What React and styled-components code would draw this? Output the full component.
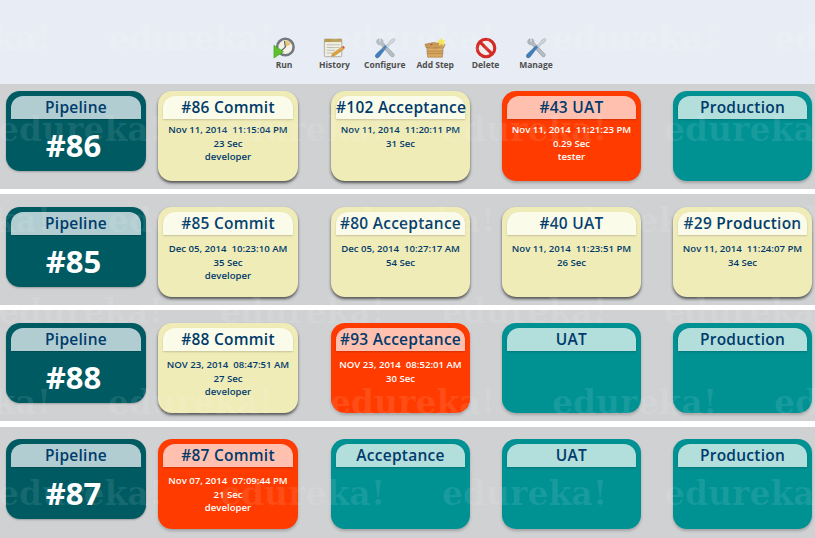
import React from "react";
import styled, { createGlobalStyle, css } from "styled-components";

const Global = createGlobalStyle`
	html, body {
		margin: 0;
		padding: 0;
		background: #d0d1d3;
		font-family: "Open Sans", "Liberation Sans", sans-serif;
	}
`;

const RunIcon = () => (
	<svg width="22" height="22" viewBox="0 0 24 24">
		<circle cx="13.5" cy="11" r="9" fill="#f4f1e6" stroke="#74787f" strokeWidth="2.8" />
		<path d="M13.5 3.5 A7.5 7.5 0 0 1 19.5 8 L13.5 11 Z" fill="#e8c877" />
		<path d="M12.5 4.5 L13.5 11 L9 15" fill="none" stroke="#55585c" strokeWidth="1.2" />
		<path d="M1 9 L11.5 16 L1 23 Z" fill="#5fc02d" stroke="#3c9a18" strokeWidth="0.6" />
	</svg>
);

const HistoryIcon = () => (
	<svg width="22" height="22" viewBox="0 0 24 24">
		<rect x="1.5" y="2.5" width="19" height="19" rx="1" fill="#eeeee2" stroke="#a9a99c" />
		<rect x="1.5" y="2" width="19" height="3.5" fill="#b79a55" />
		<path d="M4 8.5h14M4 11.5h14M4 14.5h9M4 17.5h7" stroke="#b9b9ad" strokeWidth="1" />
		<path d="M10 18.5 L21 10.5 L23 13 L12.5 20.5 L9.5 21 Z" fill="#e2a23b" stroke="#a8742a" strokeWidth="0.5" />
		<path d="M21 10.5 L23 13 L23.8 11.5 L22.5 9.8 Z" fill="#d9453a" />
	</svg>
);

const ToolsIcon = () => (
	<svg width="22" height="22" viewBox="0 0 24 24">
		<path
			d="M5.5 2 C3.5 2.5 2.5 4.5 3.2 6.5 C4 8.2 5.8 8.8 7.2 8.4 L18.5 21 C19.5 22 21.5 22 22 20.5 C22.5 19.5 22 18.5 21 17.8 L9.8 6 C10.2 4.2 9 2.4 7.4 1.8 L8 5.4 L5.8 6 Z"
			fill="#b4bcc3"
			stroke="#858e96"
			strokeWidth="0.5"
		/>
		<path d="M21.5 1.5 L23 3 L20.5 6.5 L18.8 7 L13.5 12.5 L12 11 L17.2 5.4 L17.8 3.8 Z" fill="#d0d6db" stroke="#8c959c" strokeWidth="0.5" />
		<path d="M13.8 11 L12 9.5 L2.5 18.5 C1 20 1.3 21.8 2.2 22.4 C3.3 23.2 4.8 22.8 5.8 21.6 Z" fill="#3f7fbc" stroke="#2b5f95" strokeWidth="0.5" />
	</svg>
);

const BoxIcon = () => (
	<svg width="22" height="22" viewBox="0 0 24 24">
		<path d="M3 10 L21 10 L20 22 L4 22 Z" fill="#d9a860" stroke="#96703a" strokeWidth="0.6" />
		<path d="M1 8 L10 6 L23 8 L21.5 12 L2.5 12 Z" fill="#c99a55" stroke="#96703a" strokeWidth="0.6" />
		<path d="M3 15.5h18M3 18h18" stroke="#a87f44" strokeWidth="0.7" />
		<path d="M7 8l2 0 1 1-3 0z" fill="#c5392f" />
		<path d="M19 0.5 L20.4 3.6 L23.8 4 L21.3 6.2 L22 9.5 L19 7.8 L16 9.5 L16.7 6.2 L14.2 4 L17.6 3.6 Z" fill="#f7e33f" />
	</svg>
);

const DeleteIcon = () => (
	<svg width="22" height="22" viewBox="0 0 24 24">
		<circle cx="12" cy="12" r="9.6" fill="#f3eeee" stroke="#d42a27" strokeWidth="3.4" />
		<path d="M5.5 5.5 L18.5 18.5" stroke="#d42a27" strokeWidth="3.4" />
	</svg>
);

const tools = [
	{ label: "Run", Icon: RunIcon },
	{ label: "History", Icon: HistoryIcon },
	{ label: "Configure", Icon: ToolsIcon },
	{ label: "Add Step", Icon: BoxIcon },
	{ label: "Delete", Icon: DeleteIcon },
	{ label: "Manage", Icon: ToolsIcon },
];

const rows = [
	{
		id: "#86",
		top: 7,
		height: 105,
		gap: 5,
		stages: [
			{ title: "#86 Commit", status: "ok", lines: ["Nov 11, 2014\u00a0\u00a011:15:04 PM", "23 Sec", "developer"] },
			{ title: "#102 Acceptance", status: "ok", lines: ["Nov 11, 2014\u00a0\u00a011:20:11 PM", "31 Sec"] },
			{ title: "#43 UAT", status: "fail", lines: ["Nov 11, 2014\u00a0\u00a011:21:23 PM", "0.29 Sec", "tester"] },
			{ title: "Production", status: "idle" },
		],
	},
	{
		id: "#85",
		top: 13,
		height: 111,
		gap: 5,
		stages: [
			{ title: "#85 Commit", status: "ok", lines: ["Dec 05, 2014\u00a0\u00a010:23:10 AM", "35 Sec", "developer"] },
			{ title: "#80 Acceptance", status: "ok", lines: ["Dec 05, 2014\u00a0\u00a010:27:17 AM", "54 Sec"] },
			{ title: "#40 UAT", status: "ok", lines: ["Nov 11, 2014\u00a0\u00a011:23:51 PM", "26 Sec"] },
			{ title: "#29 Production", status: "ok", lines: ["Nov 11, 2014\u00a0\u00a011:24:07 PM", "34 Sec"] },
		],
	},
	{
		id: "#88",
		top: 13,
		height: 111,
		gap: 6,
		stages: [
			{ title: "#88 Commit", status: "ok", lines: ["NOV 23, 2014\u00a0\u00a008:47:51 AM", "27 Sec", "developer"] },
			{ title: "#93 Acceptance", status: "fail", lines: ["NOV 23, 2014\u00a0\u00a008:52:01 AM", "30 Sec"] },
			{ title: "UAT", status: "idle" },
			{ title: "Production", status: "idle" },
		],
	},
	{
		id: "#87",
		top: 12,
		height: 111,
		gap: 0,
		stages: [
			{ title: "#87 Commit", status: "fail", lines: ["Nov 07, 2014\u00a0\u00a007:09:44 PM", "21 Sec", "developer"] },
			{ title: "Acceptance", status: "idle" },
			{ title: "UAT", status: "idle" },
			{ title: "Production", status: "idle" },
		],
	},
];

const palette = {
	ok: { card: "#f0ecb8", head: "#fbfbea", text: "#003b6b" },
	fail: { card: "#ff3b00", head: "#ffc0af", text: "#ffffff" },
	idle: { card: "#009193", head: "#b2dedc", text: "#ffffff" },
};

const watermarkLines = [-114, -2, -114, -2, -114, -2];

const App = () => {
	return (
		<Page>
			<Global />
			<Toolbar>
				{tools.map(({ label, Icon }) => (
					<Tool key={label}>
						<Icon />
						<ToolLabel>{label}</ToolLabel>
					</Tool>
				))}
			</Toolbar>
			{rows.map((row) => (
				<Row key={row.id} $top={row.top} $height={row.height} $gap={row.gap}>
					<PipelineCard>
						<PipelineHead>Pipeline</PipelineHead>
						<PipelineNumber>{row.id}</PipelineNumber>
					</PipelineCard>
					{row.stages.map((stage, i) => (
						<StageCard key={stage.title} $status={stage.status} $wide={i === 0}>
							<StageHead $status={stage.status}>{stage.title}</StageHead>
							<StageBody $status={stage.status} $tight={row.id === "#86"}>
								{(stage.lines || []).map((line) => (
									<div key={line}>{line}</div>
								))}
							</StageBody>
						</StageCard>
					))}
				</Row>
			))}
			<Watermark>
				{watermarkLines.map((offset, i) => (
					<WatermarkLine key={i} $offset={offset}>
						{[0, 1, 2, 3, 4].map((n) => (
							<WatermarkWord key={n}>edureka!</WatermarkWord>
						))}
					</WatermarkLine>
				))}
			</Watermark>
		</Page>
	);
};

export default App;

const Page = styled.div`
	position: relative;
	width: 815px;
	height: 538px;
	overflow: hidden;
	background: #ffffff;
`;

const Toolbar = styled.div`
	height: 84px;
	box-sizing: border-box;
	padding: 0 0 14px 5px;
	background: #e8edf5;
	display: flex;
	justify-content: center;
	align-items: flex-end;
`;

const Tool = styled.div`
	width: 50.4px;
	display: flex;
	flex-direction: column;
	align-items: center;

	svg {
		filter: blur(0.35px);
	}
`;

const ToolLabel = styled.span`
	font-family: "Open Sans", sans-serif;
	font-size: 8.5px;
	font-weight: 700;
	line-height: 11px;
	color: #4f4f4f;
	white-space: nowrap;
`;

const Row = styled.div`
	height: ${(p) => p.$height}px;
	box-sizing: border-box;
	padding: ${(p) => p.$top}px 0 0 6px;
	margin-bottom: ${(p) => p.$gap}px;
	background: #d0d1d3;
	display: grid;
	grid-template-columns: 152px 173px 171px 171px 139px;
	align-items: start;
`;

const PipelineCard = styled.div`
	width: 140px;
	height: 80px;
	box-sizing: border-box;
	padding: 5px 5px 0;
	border-radius: 14px;
	background: #005a62;
	box-shadow: 0 1px 2px rgba(0, 0, 0, 0.25);
`;

const headShape = css`
	height: 23px;
	line-height: 22px;
	text-align: center;
	font-size: 15.5px;
	font-weight: 600;
	letter-spacing: 0.25px;
	color: #003b6b;
	border-radius: 12px 12px 0 0;
	white-space: nowrap;
`;

const PipelineHead = styled.div`
	${headShape}
	background: #b1cdd1;
	box-shadow: 0 1px 1px rgba(0, 0, 0, 0.15);
`;

const PipelineNumber = styled.div`
	padding-right: 5px;
	text-align: center;
	font-size: 31px;
	font-weight: 700;
	line-height: 52px;
	color: #ffffff;
`;

const StageCard = styled.div`
	width: ${(p) => (p.$wide ? 140 : 139)}px;
	height: 90px;
	box-sizing: border-box;
	padding: 5px 5px 0;
	border-radius: 14px;
	background: ${(p) => palette[p.$status].card};
	box-shadow: ${(p) =>
		p.$status === "ok"
			? "0 2px 3px rgba(40, 40, 40, 0.75)"
			: "0 2px 3px rgba(0, 0, 0, 0.22)"};
`;

const StageHead = styled.div`
	${headShape}
	background: ${(p) => palette[p.$status].head};
	box-shadow: 0 1px 2px rgba(0, 0, 0, 0.18);
`;

const StageBody = styled.div`
	padding-top: ${(p) => (p.$tight ? 4 : 7)}px;
	text-align: center;
	font-size: 9.6px;
	font-weight: 600;
	line-height: 13.5px;
	white-space: nowrap;
	color: ${(p) => palette[p.$status].text};
`;

const Watermark = styled.div`
	position: absolute;
	top: 17px;
	left: 0;
	right: 0;
	pointer-events: none;
	user-select: none;
`;

const WatermarkLine = styled.div`
	height: 91px;
	display: flex;
	margin-left: ${(p) => p.$offset}px;
`;

const WatermarkWord = styled.div`
	flex: 0 0 222px;
	font-family: "DejaVu Serif", serif;
	font-size: 33px;
	font-weight: 700;
	line-height: 44px;
	color: rgba(255, 255, 255, 0.09);
`;
